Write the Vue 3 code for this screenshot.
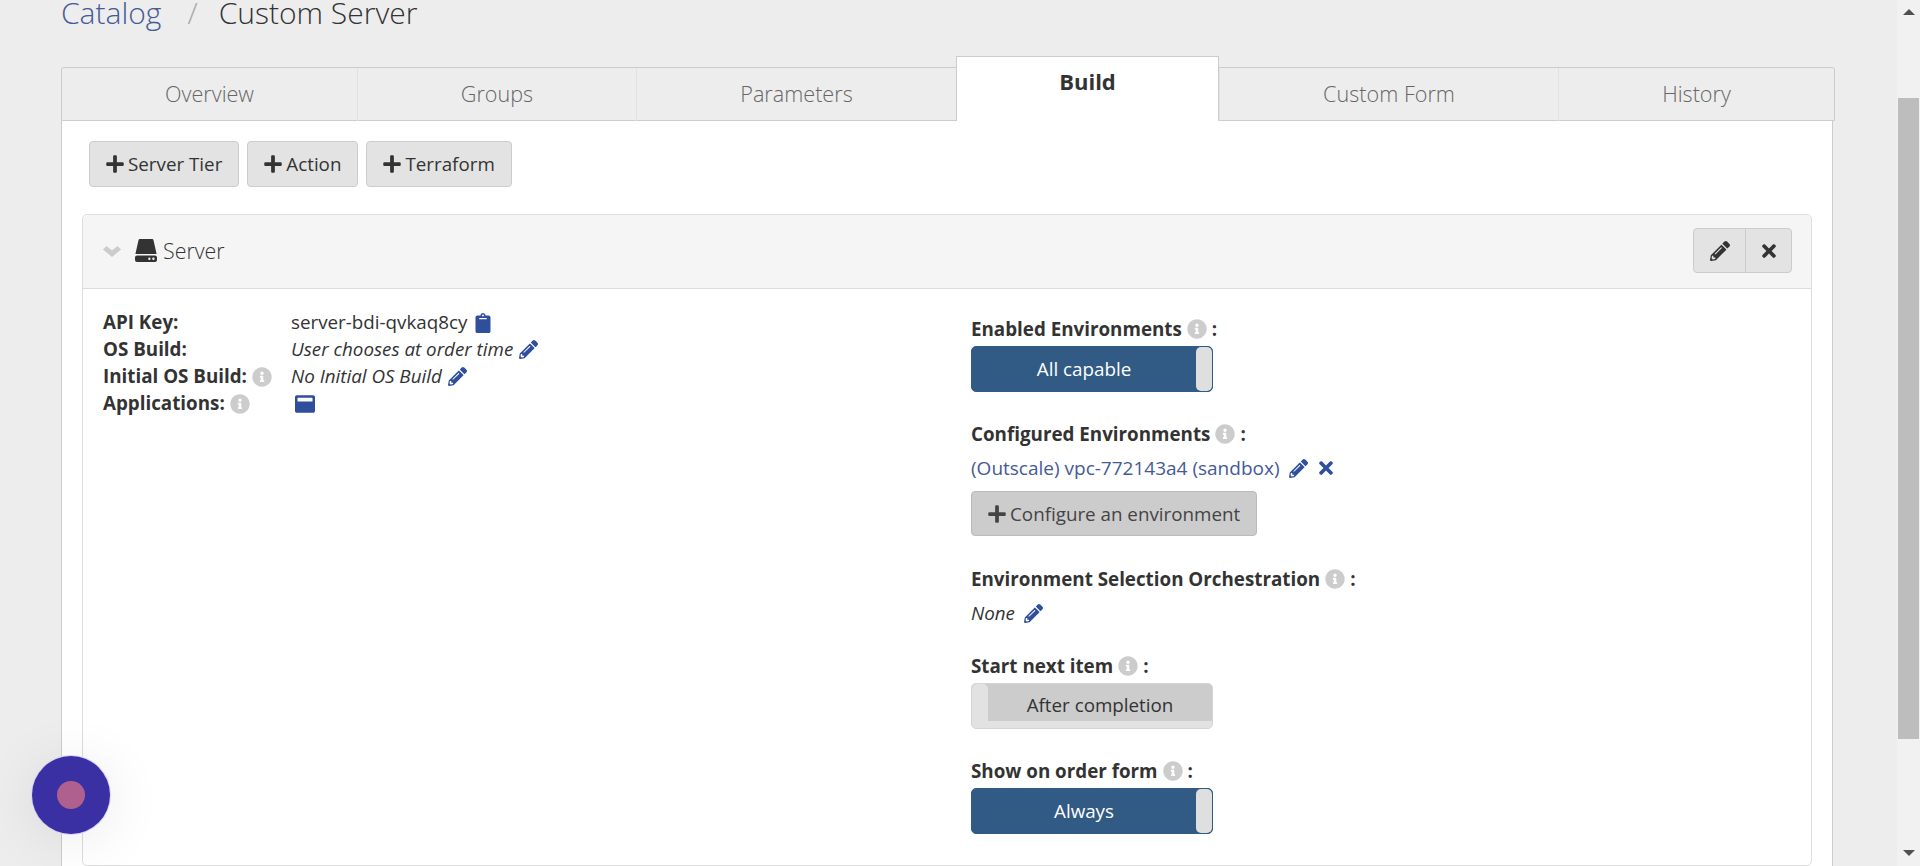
<template>
  <div class="page">
    <div class="content">
      <h1 class="crumbs">
        <a class="crumb-link">Catalog</a>
        <span class="crumb-sep">/</span>
        <span>Custom Server</span>
      </h1>

      <div class="tabs">
        <div v-for="tab in tabs" :key="tab" class="tab" :class="{ active: tab === 'Build' }">{{ tab }}</div>
      </div>

      <div class="tab-body">
        <div class="actions">
          <button v-for="label in addButtons" :key="label" class="btn">
            <svg class="icon plus" :viewBox="icons.plus.box"><path :d="icons.plus.d" /></svg>{{ label }}
          </button>
        </div>

        <div class="tier">
          <div class="tier-head">
            <svg class="icon chevron" :viewBox="icons.chevron.box"><path :d="icons.chevron.d" /></svg>
            <svg class="icon drive" :viewBox="icons.drive.box"><path fill-rule="evenodd" :d="icons.drive.d" /></svg>
            <span class="tier-name">Server</span>
            <div class="btn-group">
              <button class="group-btn">
                <svg class="icon" :viewBox="icons.pencil.box"><path :d="icons.pencil.d" /></svg>
              </button>
              <button class="group-btn">
                <svg class="icon" :viewBox="icons.times.box"><path :d="icons.times.d" /></svg>
              </button>
            </div>
          </div>

          <div class="tier-body">
            <div class="details">
              <div class="detail-label">API Key:</div>
              <div class="detail-value">
                server-bdi-qvkaq8cy
                <svg class="icon blue clip" :viewBox="icons.clipboard.box"><path :d="icons.clipboard.d" /></svg>
              </div>
              <div class="detail-label">OS Build:</div>
              <div class="detail-value">
                <em>User chooses at order time</em>
                <svg class="icon blue edit" :viewBox="icons.pencil.box"><path :d="icons.pencil.d" /></svg>
              </div>
              <div class="detail-label">
                Initial OS Build:
                <svg class="icon info" :viewBox="icons.info.box"><path :d="icons.info.d" /></svg>
              </div>
              <div class="detail-value">
                <em>No Initial OS Build</em>
                <svg class="icon blue edit" :viewBox="icons.pencil.box"><path :d="icons.pencil.d" /></svg>
              </div>
              <div class="detail-label">
                Applications:
                <svg class="icon info" :viewBox="icons.info.box"><path :d="icons.info.d" /></svg>
              </div>
              <div class="detail-value">
                <svg class="icon blue app" :viewBox="icons.window.box"><path :d="icons.window.d" /></svg>
              </div>
            </div>

            <div class="settings">
              <div class="field-label first">
                Enabled Environments
                <svg class="icon info" :viewBox="icons.info.box"><path :d="icons.info.d" /></svg>
                <span>:</span>
              </div>
              <div class="toggle on"><span class="toggle-text">All capable</span><span class="handle"></span></div>

              <div class="field-label">
                Configured Environments
                <svg class="icon info" :viewBox="icons.info.box"><path :d="icons.info.d" /></svg>
                <span>:</span>
              </div>
              <div class="field-value">
                <a class="env-link">(Outscale) vpc-772143a4 (sandbox)</a>
                <svg class="icon blue edit-env" :viewBox="icons.pencil.box"><path :d="icons.pencil.d" /></svg>
                <svg class="icon blue remove" :viewBox="icons.times.box"><path :d="icons.times.d" /></svg>
              </div>
              <button class="btn dark">
                <svg class="icon plus" :viewBox="icons.plus.box"><path :d="icons.plus.d" /></svg>Configure an environment
              </button>

              <div class="field-label orchestration">
                Environment Selection Orchestration
                <svg class="icon info" :viewBox="icons.info.box"><path :d="icons.info.d" /></svg>
                <span>:</span>
              </div>
              <div class="field-value">
                <em>None</em>
                <svg class="icon blue edit-env" :viewBox="icons.pencil.box"><path :d="icons.pencil.d" /></svg>
              </div>

              <div class="field-label next-item">
                Start next item
                <svg class="icon info" :viewBox="icons.info.box"><path :d="icons.info.d" /></svg>
                <span>:</span>
              </div>
              <div class="toggle off"><span class="handle"></span><span class="toggle-text">After completion</span></div>

              <div class="field-label">
                Show on order form
                <svg class="icon info" :viewBox="icons.info.box"><path :d="icons.info.d" /></svg>
                <span>:</span>
              </div>
              <div class="toggle on"><span class="toggle-text">Always</span><span class="handle"></span></div>
            </div>
          </div>
        </div>
      </div>
    </div>

    <div class="scrollbar">
      <span class="arrow up"></span>
      <span class="thumb"></span>
      <span class="arrow down"></span>
    </div>

    <div class="launcher"><span class="launcher-dot"></span></div>
  </div>
</template>

<script setup>
const tabs = ['Overview', 'Groups', 'Parameters', 'Build', 'Custom Form', 'History']
const addButtons = ['Server Tier', 'Action', 'Terraform']

const icons = {
  plus: {
    box: '0 0 448 512',
    d: 'M416 208H272V64c0-17.67-14.33-32-32-32h-32c-17.67 0-32 14.33-32 32v144H32c-17.67 0-32 14.33-32 32v32c0 17.67 14.33 32 32 32h144v144c0 17.67 14.33 32 32 32h32c17.67 0 32-14.33 32-32V304h144c17.67 0 32-14.33 32-32v-32c0-17.67-14.33-32-32-32z'
  },
  chevron: {
    box: '0 0 18 11',
    d: 'M0 3.5L3.5 0 9 4.6 14.5 0 18 3.5 9 11z'
  },
  drive: {
    box: '0 0 22 23',
    d: 'M5 0h12a1.5 1.5 0 0 1 1.5 1.2L21.6 15H.4L3.5 1.2A1.5 1.5 0 0 1 5 0zM2 16.5h18a2 2 0 0 1 2 2V21a2 2 0 0 1-2 2H2a2 2 0 0 1-2-2v-2.5a2 2 0 0 1 2-2zM14.4 18.5a1.2 1.2 0 1 0 0 2.4 1.2 1.2 0 0 0 0-2.4zM18.4 18.5a1.2 1.2 0 1 0 0 2.4 1.2 1.2 0 0 0 0-2.4z'
  },
  pencil: {
    box: '0 0 512 512',
    d: 'M497.9 142.1l-46.1 46.1c-4.7 4.7-12.3 4.7-17 0l-111-111c-4.7-4.7-4.7-12.3 0-17l46.1-46.1c18.7-18.7 49.1-18.7 67.9 0l60.1 60.1c18.8 18.7 18.8 49.1 0 67.9zM284.2 99.8L21.6 362.4.4 483.9c-2.9 16.4 11.4 30.6 27.8 27.8l121.5-21.3 262.6-262.6c4.7-4.7 4.7-12.3 0-17l-111-111c-4.8-4.7-12.4-4.7-17.1 0zM124.1 339.9c-5.5-5.5-5.5-14.3 0-19.8l154-154c5.5-5.5 14.3-5.5 19.8 0s5.5 14.3 0 19.8l-154 154c-5.5 5.5-14.3 5.5-19.8 0zM88 424h48v36.3l-64.5 11.3-31.1-31.1L51.7 376H88v48z'
  },
  times: {
    box: '0 0 352 512',
    d: 'M242.72 256l100.07-100.07c12.28-12.28 12.28-32.19 0-44.48l-22.24-22.24c-12.28-12.28-32.19-12.28-44.48 0L176 189.28 75.93 89.21c-12.28-12.28-32.19-12.28-44.48 0L9.21 111.45c-12.28 12.28-12.28 32.19 0 44.48L109.28 256 9.21 356.07c-12.28 12.28-12.28 32.19 0 44.48l22.24 22.24c12.28 12.28 32.2 12.28 44.48 0L176 322.72l100.07 100.07c12.28 12.28 32.2 12.28 44.48 0l22.24-22.24c12.28-12.28 12.28-32.19 0-44.48L242.72 256z'
  },
  clipboard: {
    box: '0 0 384 512',
    d: 'M384 112v352c0 26.51-21.49 48-48 48H48c-26.51 0-48-21.49-48-48V112c0-26.51 21.49-48 48-48h80c0-35.29 28.71-64 64-64s64 28.71 64 64h80c26.51 0 48 21.49 48 48zM192 40c-13.255 0-24 10.745-24 24s10.745 24 24 24 24-10.745 24-24-10.745-24-24-24m96 114v-20a6 6 0 0 0-6-6H102a6 6 0 0 0-6 6v20a6 6 0 0 0 6 6h180a6 6 0 0 0 6-6z'
  },
  info: {
    box: '0 0 512 512',
    d: 'M256 8C119.043 8 8 119.083 8 256c0 136.997 111.043 248 248 248s248-111.003 248-248C504 119.083 392.957 8 256 8zm0 110c23.196 0 42 18.804 42 42s-18.804 42-42 42-42-18.804-42-42 18.804-42 42-42zm56 254c0 6.627-5.373 12-12 12h-88c-6.627 0-12-5.373-12-12v-24c0-6.627 5.373-12 12-12h12v-64h-12c-6.627 0-12-5.373-12-12v-24c0-6.627 5.373-12 12-12h64c6.627 0 12 5.373 12 12v100h12c6.627 0 12 5.373 12 12v24z'
  },
  window: {
    box: '0 0 512 512',
    d: 'M464 32H48C21.5 32 0 53.5 0 80v352c0 26.5 21.5 48 48 48h416c26.5 0 48-21.5 48-48V80c0-26.5-21.5-48-48-48zm-16 160H64v-84c0-6.6 5.4-12 12-12h360c6.6 0 12 5.4 12 12v84z'
  }
}
</script>

<style>
html,
body {
  margin: 0;
  overflow: hidden;
  background: #ededed;
}
</style>

<style scoped>
.page {
  position: relative;
  display: flex;
  height: 866px;
  overflow: hidden;
  background: #ededed;
  color: #333;
  font-family: "Open Sans", "Liberation Sans", sans-serif;
  font-size: 18.8px;
}

.content {
  flex: 1;
  min-width: 0;
  padding: 0 62px 0 61px;
}

/* page is scrolled a little, the title runs into the top edge */
.crumbs {
  display: flex;
  gap: 24px;
  height: 67px;
  margin: -8px 0 8px;
  font-size: 30px;
  font-weight: 300;
  line-height: 42px;
  box-sizing: border-box;
  color: #333;
}

.crumb-link {
  color: #455a96;
}

.crumb-sep {
  margin: 0 -3px 0 2px;
  color: #aaa;
}

.tabs {
  display: grid;
  grid-template-columns: 295px 279px 320px 263px 339px 1fr;
  height: 54px;
  border: 1px solid #ccc;
  border-radius: 3px 3px 0 0;
  box-sizing: border-box;
}

.tab {
  border-left: 1px solid #e2e2e2;
  font-size: 21.6px;
  font-weight: 300;
  line-height: 51px;
  text-align: center;
  color: #666;
}

.tab:first-child {
  border-left: 0;
}

.tab.active {
  position: relative;
  z-index: 1;
  height: 65px;
  margin-top: -12px;
  border: 1px solid #ccc;
  border-bottom: 0;
  background: #fff;
  box-sizing: border-box;
  font-size: 22px;
  font-weight: 700;
  line-height: 48px;
  color: #333;
}

.tab-body {
  height: 746px;
  margin-right: 2px;
  padding: 20px 20px 0 20px;
  border: 1px solid #ccc;
  border-top: 0;
  background: #fff;
  box-sizing: border-box;
}

.actions {
  display: flex;
  gap: 8px;
  margin-left: 7px;
}

.btn {
  display: inline-flex;
  align-items: center;
  height: 46px;
  padding: 0 16px;
  border: 1px solid #ccc;
  border-radius: 4px;
  background: #e3e3e3;
  color: #333;
  font: inherit;
}

.btn.dark {
  height: 45px;
  margin-top: 11px;
  background: #ccc;
  border-color: #bbb;
  color: #444;
}

.icon {
  fill: currentColor;
  flex: none;
}

.plus {
  width: 18px;
  height: 20px;
  margin-right: 4px;
}

.tier {
  height: 652px;
  margin-top: 27px;
  border: 1px solid #ddd;
  border-radius: 5px;
  box-sizing: border-box;
}

.tier-head {
  display: flex;
  align-items: center;
  height: 73px;
  padding: 0 19px 0 20px;
  border-bottom: 1px solid #ddd;
  background: #f5f5f5;
  border-radius: 5px 5px 0 0;
}

.chevron {
  width: 18px;
  height: 11px;
  margin-right: 14px;
  color: #ccc;
}

.drive {
  width: 22px;
  height: 23px;
  margin-top: -2px;
  margin-right: 6px;
}

.tier-name {
  margin-top: -2px;
  font-size: 21.4px;
  font-weight: 300;
}

.btn-group {
  display: flex;
  height: 45px;
  margin-top: -2px;
  margin-left: auto;
  border: 1px solid #ccc;
  border-radius: 4px;
  background: #e3e3e3;
  box-sizing: border-box;
}

.group-btn {
  width: 51px;
  padding: 0;
  border: 0;
  background: transparent;
  color: #333;
}

.group-btn + .group-btn {
  width: 46px;
  border-left: 1px solid #ccc;
}

.group-btn .icon {
  display: block;
  width: 20px;
  height: 20px;
  margin: 0 auto;
}

.tier-body {
  display: flex;
  padding: 18px 20px 0;
}

.details {
  display: grid;
  grid-template-columns: 188px 1fr;
  grid-auto-rows: 27px;
  align-items: center;
  align-self: flex-start;
  width: 868px;
  margin-top: 2px;
  line-height: 27px;
}

.detail-label {
  display: flex;
  align-items: center;
  gap: 5px;
  font-weight: 700;
}

.detail-value {
  display: flex;
  align-items: center;
  gap: 6px;
}

.info {
  width: 20px;
  height: 20px;
  color: #ccc;
}

.blue {
  color: #2f4f9c;
}

.clip {
  width: 16px;
  height: 20px;
  margin-left: 2px;
}

.edit {
  width: 19px;
  height: 19px;
}

.app {
  width: 20px;
  height: 20px;
  margin-left: 4px;
}

.settings {
  flex: 1;
  display: flex;
  flex-direction: column;
  align-items: flex-start;
}

.field-label {
  display: flex;
  align-items: center;
  gap: 5px;
  margin-top: 30px;
  font-weight: 700;
  line-height: 24px;
}

.field-label.first {
  margin-top: 10px;
}

.field-label.orchestration {
  margin-top: 31px;
}

.field-label.next-item {
  margin-top: 29px;
}

.field-value {
  display: flex;
  align-items: center;
  margin-top: 10px;
  line-height: 24px;
}

.env-link {
  font-size: 19px;
  color: #455a96;
}

.edit-env {
  width: 19px;
  height: 19px;
  margin-left: 9px;
}

.remove {
  width: 14px;
  height: 20px;
  margin-left: 11px;
}

.toggle {
  display: flex;
  width: 242px;
  height: 46px;
  margin-top: 5px;
  border-radius: 5px;
  box-sizing: border-box;
  overflow: hidden;
  text-align: center;
  line-height: 44px;
}

.toggle.on {
  border: 1px solid #315a84;
  background: #315a84;
  color: #fff;
}

.toggle.off {
  border: 1px solid #d4d4d4;
  background: linear-gradient(#ccc 0 37px, #e2e2e2 37px);
  line-height: 42px;
}

.toggle-text {
  flex: 1;
}

.handle {
  flex: none;
  width: 16px;
  background: #dfdfdf;
  border-radius: 5px;
}

.toggle.off .handle {
  background: #e2e2e2;
}

.scrollbar {
  position: relative;
  flex: none;
  display: flex;
  flex-direction: column;
  align-items: center;
  width: 23px;
  background: #f1f1f1;
}

.thumb {
  width: 21px;
  height: 641px;
  margin-top: 83px;
  background: #bdbdbd;
}

.arrow {
  width: 0;
  height: 0;
  border-left: 6px solid transparent;
  border-right: 6px solid transparent;
}

.arrow.up {
  margin-top: 9px;
  border-bottom: 6px solid #505050;
}

.arrow.down {
  margin-top: 111px;
  border-top: 6px solid #505050;
}

.launcher {
  position: absolute;
  left: 32px;
  top: 756px;
  display: flex;
  align-items: center;
  justify-content: center;
  width: 78px;
  height: 78px;
  border-radius: 50%;
  background: #3a2fa3;
  box-shadow: 0 0 0 1px #d8d5f2, 0 6px 60px rgba(0, 0, 0, 0.09);
}

.launcher-dot {
  width: 28px;
  height: 28px;
  border-radius: 50%;
  background: #b0608f;
}
</style>
